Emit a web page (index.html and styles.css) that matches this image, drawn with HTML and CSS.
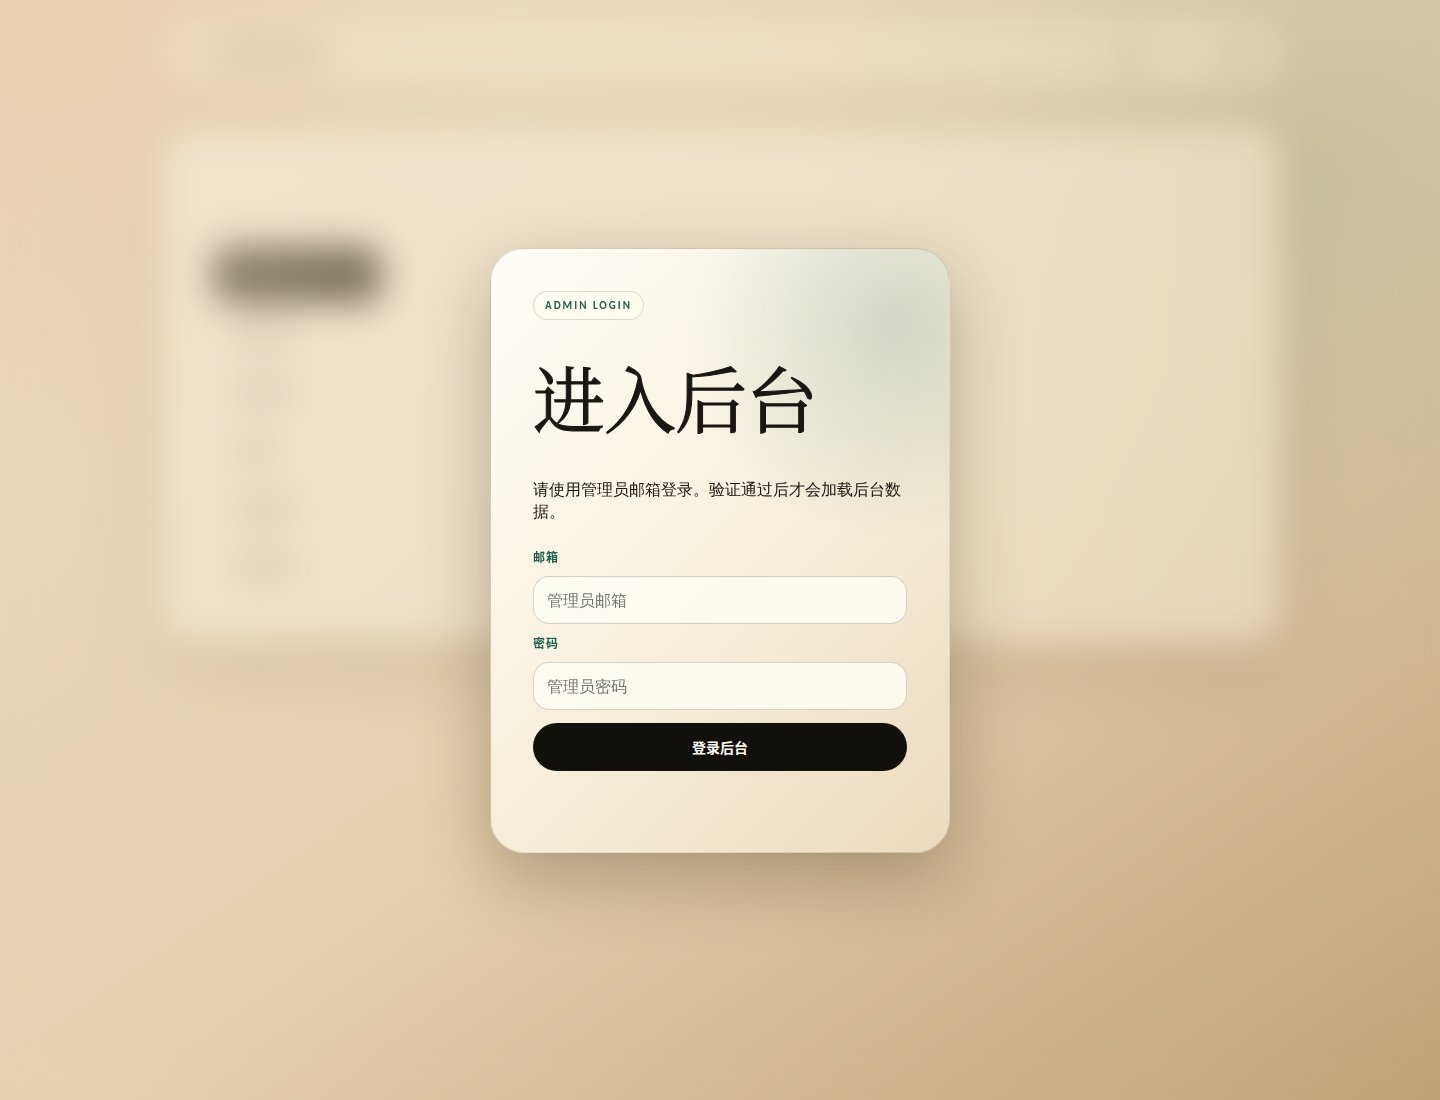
FILE: index.html
```html
<!DOCTYPE html>
<html lang="zh-CN">
<head>
<meta charset="utf-8">
<meta name="viewport" content="width=device-width, initial-scale=1">
<title>进入后台</title>
<link rel="stylesheet" href="styles.css">
</head>
<body>
<div class="shell" aria-hidden="true">
  <div class="topbar">
    <span class="mark mark-brand"></span>
    <span class="mark mark-link"></span>
    <span class="mark mark-user"></span>
  </div>
  <div class="workspace">
    <div class="sidebar">
      <span class="tab"></span>
      <span class="item"></span>
      <span class="item"></span>
      <span class="item item-short"></span>
      <span class="item"></span>
      <span class="item"></span>
    </div>
  </div>
</div>
<main class="gate">
  <form class="card">
    <span class="badge">ADMIN LOGIN</span>
    <h1 class="title">进入后台</h1>
    <p class="intro">请使用管理员邮箱登录。验证通过后才会加载后台数据。</p>
    <label class="label" for="email">邮箱</label>
    <input class="field" id="email" type="email" placeholder="管理员邮箱">
    <label class="label" for="password">密码</label>
    <input class="field" id="password" type="password" placeholder="管理员密码">
    <button class="submit" type="button">登录后台</button>
  </form>
</main>
</body>
</html>
```

FILE: styles.css
```css
* { box-sizing: border-box; }

body {
  margin: 0;
  min-height: 100vh;
  color: #191713;
  font-family: "Trebuchet MS", Lato, "WenQuanYi Zen Hei", "Noto Sans CJK SC", sans-serif;
  background:
    radial-gradient(circle at 4% 4%, rgba(232, 178, 130, 0.36), transparent 26%),
    radial-gradient(circle at 92% 16%, rgba(140, 158, 122, 0.42), transparent 32%),
    linear-gradient(145deg, #f6edda 0%, #e8d6b6 56%, #b59568 100%);
}

.shell {
  width: min(1120px, calc(100% - 40px));
  margin: 0 auto;
  padding-top: 22px;
}

.topbar {
  display: flex;
  align-items: center;
  gap: 60px;
  height: 64px;
  padding: 0 20px 0 56px;
  border-radius: 32px;
  background: rgba(255, 248, 232, 0.5);
}

.mark { height: 34px; border-radius: 12px; background: rgba(80, 75, 70, 0.13); }
.mark-brand { width: 110px; margin-right: auto; }
.mark-link { width: 44px; }
.mark-user { width: 48px; }

.workspace {
  min-height: 514px;
  margin-top: 42px;
  padding: 118px 52px 20px;
  border-radius: 30px;
  background: linear-gradient(135deg, rgba(255, 248, 238, 0.8), rgba(255, 248, 236, 0.6));
  box-shadow: 0 24px 70px rgba(80, 60, 20, 0.18);
}

.sidebar {
  display: flex;
  flex-direction: column;
  width: 170px;
}

.tab {
  height: 58px;
  margin-bottom: 16px;
  border-radius: 20px;
  background: linear-gradient(90deg, rgba(23, 21, 14, 0.62), rgba(23, 21, 14, 0.74));
}

.item {
  width: 60px;
  height: 30px;
  margin: 0 0 28px 22px;
  border-radius: 10px;
  background: rgba(60, 55, 50, 0.13);
}

.item-short { width: 44px; }

.gate {
  position: fixed;
  inset: 0;
  display: grid;
  place-items: center;
  padding: 20px;
  background: rgba(214, 192, 150, 0.3);
  backdrop-filter: blur(18px);
}

.card {
  display: flex;
  flex-direction: column;
  width: min(460px, 100%);
  padding: 42px 42px 81px;
  border: 1px solid rgba(25, 23, 19, 0.14);
  border-radius: 34px;
  background:
    radial-gradient(circle at 88% 12%, rgba(31, 94, 75, 0.17), transparent 32%),
    linear-gradient(135deg, #fffdf7 0%, #fbf4e6 36%, #f4ead6 64%, #ebdabf 100%);
  box-shadow: 0 24px 70px rgba(60, 45, 20, 0.33);
}

.badge {
  align-self: flex-start;
  padding: 7px 11px;
  border: 1px solid rgba(31, 94, 75, 0.18);
  border-radius: 999px;
  background: rgba(255, 253, 240, 0.6);
  color: #1f5e4b;
  font-family: "Trebuchet MS", Carlito, Lato, sans-serif;
  font-size: 11px;
  font-weight: 700;
  line-height: 13px;
  letter-spacing: 2px;
}

.title {
  margin: 40px 0 46px;
  font-family: Georgia, "Noto Serif CJK SC", "Source Han Serif SC", "AR PL UMing CN", "Songti SC", SimSun, "Noto Sans CJK SC", serif;
  font-size: 72px;
  font-weight: 400;
  line-height: 72px;
  letter-spacing: -1px;
  -webkit-text-stroke: 1px currentColor;
}

.intro {
  margin: 0 0 26px;
  font-size: 16px;
  line-height: 22px;
}

.label {
  margin-bottom: 10px;
  color: #1f5e4b;
  font-family: "Noto Sans CJK SC", sans-serif;
  font-size: 12px;
  font-weight: 700;
  line-height: 18px;
  letter-spacing: 1px;
}

.field {
  height: 48px;
  margin: 0 0 10px;
  padding: 0 13px;
  border: 1px solid rgba(25, 23, 19, 0.18);
  border-radius: 16px;
  background: rgba(255, 255, 246, 0.78);
  color: #191713;
  font: inherit;
}

.field::placeholder { color: #757575; }

.submit {
  height: 48px;
  margin-top: 3px;
  border: 0;
  border-radius: 999px;
  background: #11100b;
  color: #fffaf0;
  font-family: "Noto Sans CJK SC", sans-serif;
  font-size: 14px;
  font-weight: 700;
}
```
